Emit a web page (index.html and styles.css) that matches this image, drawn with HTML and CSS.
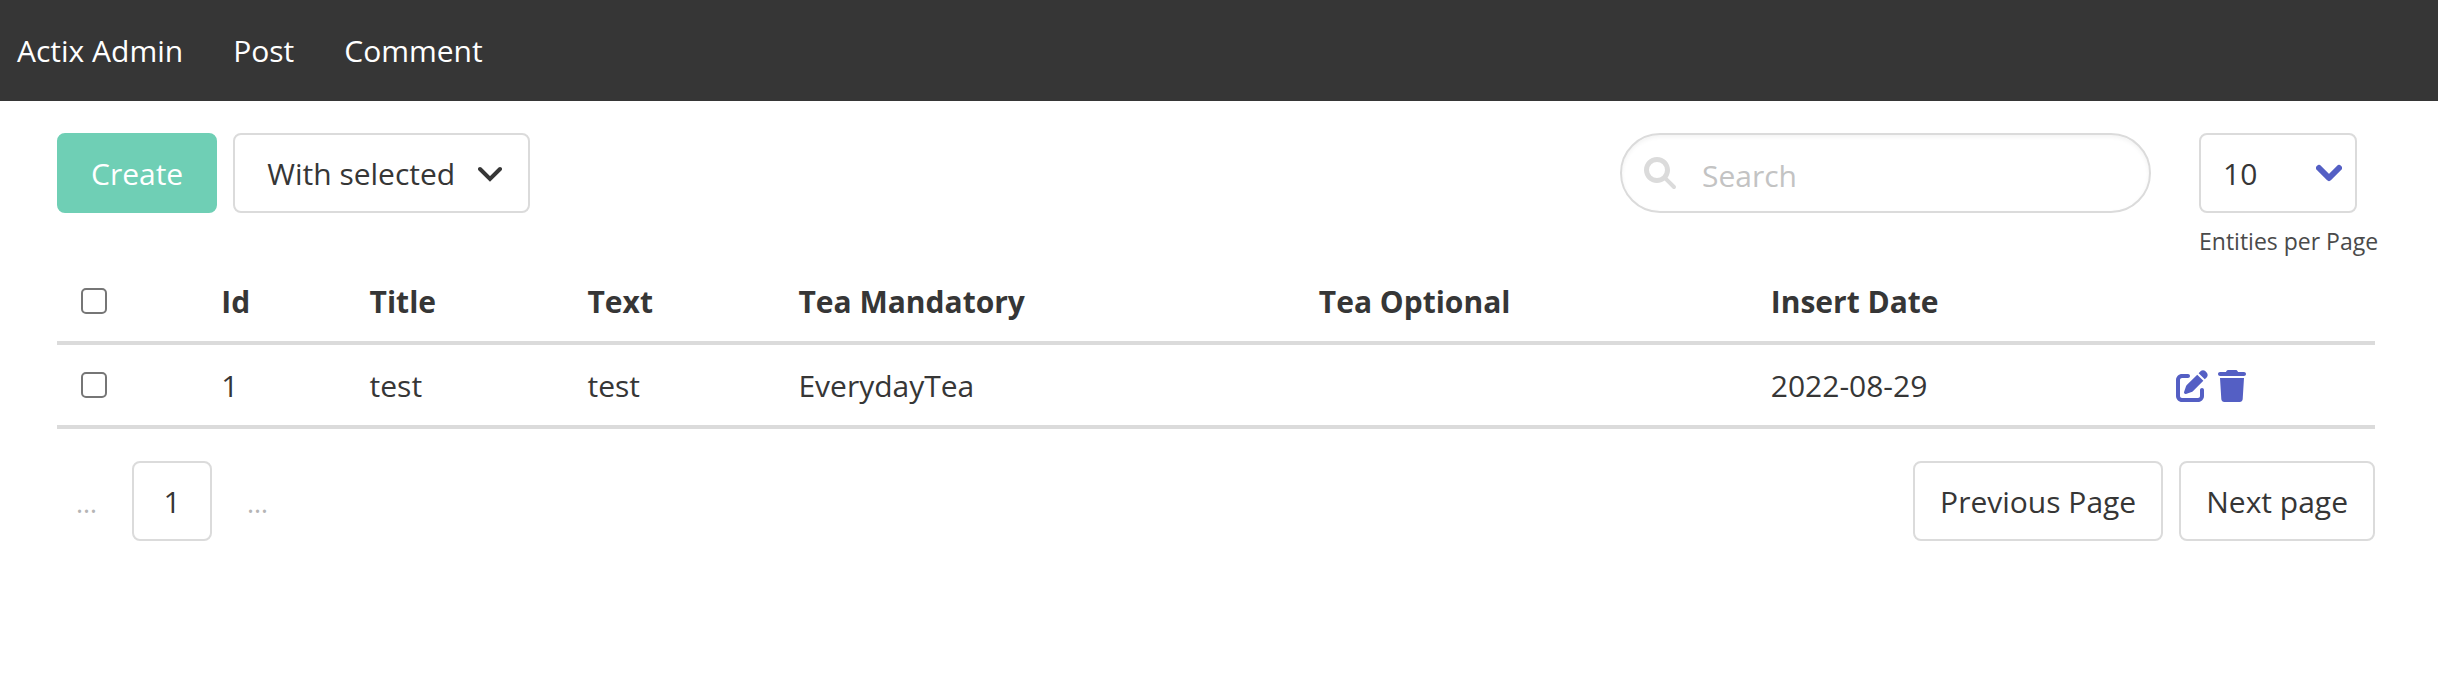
FILE: index.html
```html
<!DOCTYPE html>
<html lang="en">
<head>
<meta charset="utf-8">
<title>Actix Admin</title>
<link rel="stylesheet" href="styles.css">
</head>
<body>
<nav class="navbar" aria-label="Main">
  <a class="navbar-item" href="#">Actix Admin</a>
  <a class="navbar-item" href="#">Post</a>
  <a class="navbar-item" href="#">Comment</a>
</nav>
<main class="content">
  <div class="toolbar">
    <div class="group">
      <button class="button primary" type="button">Create</button>
      <button class="button" type="button">With selected
        <svg class="angle" viewBox="0 0 24 16" aria-hidden="true"><path d="M2 3 12 13 22 3"/></svg>
      </button>
    </div>
    <div class="filters">
      <div class="search">
        <input class="search-input" type="search" placeholder="Search" aria-label="Search">
        <svg class="search-icon" viewBox="0 0 512 512" aria-hidden="true"><path fill-rule="evenodd" d="M416 208c0 45.9-14.9 88.3-40 122.7L502.6 457.4c12.5 12.5 12.5 32.8 0 45.3s-32.8 12.5-45.3 0L330.7 376c-34.4 25.2-76.8 40-122.7 40C93.1 416 0 322.9 0 208S93.1 0 208 0S416 93.1 416 208zM208 336a128 128 0 1 0 0-256 128 128 0 1 0 0 256z"/></svg>
      </div>
      <div class="per-page">
        <div class="select">
          <select id="per-page" class="select-box"><option>10</option><option>20</option><option>50</option></select>
          <svg class="select-arrow" viewBox="0 0 26 18" aria-hidden="true"><path d="M3 4 13 14 23 4"/></svg>
        </div>
        <label class="help" for="per-page">Entities per Page</label>
      </div>
    </div>
  </div>
  <table class="table">
    <colgroup>
      <col class="c-check"><col class="c-id"><col class="c-title"><col class="c-text"><col class="c-mandatory"><col class="c-optional"><col class="c-date"><col>
    </colgroup>
    <thead>
      <tr>
        <th><input class="checkbox" type="checkbox" aria-label="Select all"></th>
        <th>Id</th><th>Title</th><th>Text</th><th>Tea Mandatory</th><th>Tea Optional</th><th>Insert Date</th><th></th>
      </tr>
    </thead>
    <tbody>
      <tr>
        <td><input class="checkbox" type="checkbox" aria-label="Select row 1"></td>
        <td>1</td><td>test</td><td>test</td><td>EverydayTea</td><td></td><td>2022-08-29</td>
        <td>
          <div class="actions">
            <a class="action" href="#" aria-label="Edit"><svg class="icon-edit" viewBox="0 0 512 512" aria-hidden="true"><path d="M471.6 21.7c-21.9-21.9-57.3-21.9-79.2 0L362.3 51.7l97.9 97.9 30.1-30.1c21.9-21.9 21.9-57.3 0-79.2L471.6 21.7zm-299.2 220c-6.1 6.1-10.8 13.6-13.5 21.9l-29.6 88.8c-2.9 8.6-.6 18.1 5.8 24.6s15.9 8.7 24.6 5.8l88.8-29.6c8.2-2.7 15.7-7.4 21.9-13.5L437.7 172.3 339.7 74.3 172.4 241.7zM96 64C43 64 0 107 0 160V416c0 53 43 96 96 96H352c53 0 96-43 96-96V320c0-17.7-14.3-32-32-32s-32 14.3-32 32v96c0 17.7-14.3 32-32 32H96c-17.7 0-32-14.3-32-32V160c0-17.7 14.3-32 32-32h96c17.7 0 32-14.3 32-32s-14.3-32-32-32H96z"/></svg></a>
            <a class="action" href="#" aria-label="Delete"><svg class="icon-trash" viewBox="0 0 448 512" aria-hidden="true"><path d="M135.2 17.7L128 32H32C14.3 32 0 46.3 0 64S14.3 96 32 96H416c17.7 0 32-14.3 32-32s-14.3-32-32-32H320l-7.2-14.3C307.4 6.8 296.3 0 284.2 0H163.8c-12.1 0-23.2 6.8-28.6 17.7zM416 128H32L53.2 467c1.6 25.3 22.6 45 47.9 45H346.9c25.3 0 46.3-19.7 47.9-45L416 128z"/></svg></a>
          </div>
        </td>
      </tr>
    </tbody>
  </table>
  <nav class="pagination" aria-label="Pagination">
    <div class="pages">
      <span class="ellipsis">…</span>
      <a class="page current" href="#" aria-label="Page 1">1</a>
      <span class="ellipsis">…</span>
    </div>
    <div class="group">
      <a class="page" href="#">Previous Page</a>
      <a class="page" href="#">Next page</a>
    </div>
  </nav>
</main>
</body>
</html>
```
FILE: styles.css
```css
*, *::before, *::after { box-sizing: border-box; }
body {
  margin: 0;
  background: #fff;
  color: #363636;
  font-family: "Open Sans", "Noto Sans", sans-serif;
  font-size: 30px;
  line-height: 48px;
}
a { color: inherit; text-decoration: none; }
button, input, select { font: inherit; color: inherit; }

.navbar { display: flex; gap: 50px; padding: 27px 17px 26px; background: #363636; color: #fff; }

.content { padding: 32px 63px 32px 57px; }
.toolbar { display: flex; justify-content: space-between; }
.group { display: flex; gap: 16px; align-items: flex-start; }
.button, .page {
  display: flex; align-items: center; justify-content: center;
  height: 80px; border: 2px solid #dbdbdb; border-radius: 8px;
  background: #fff; white-space: nowrap;
}
.button { padding: 2px 26px 0 32px; gap: 23px; }
.button.primary { padding: 2px 32px 0; border-color: #6fcfb5; background: #6fcfb5; color: #fff; }
.angle { width: 24px; height: 16px; fill: none; stroke: #363636; stroke-width: 4; stroke-linecap: round; }

.filters { display: flex; gap: 48px; }
.search { position: relative; width: 531px; height: 80px; }
.search-input {
  width: 100%; height: 100%; margin: 0; padding: 4px 32px 0 80px;
  border: 2px solid #dbdbdb; border-radius: 40px; background: #fff;
  box-shadow: inset 0 2px 4px rgba(10, 10, 10, .05);
  appearance: none; outline: none;
}
.search-input::placeholder { color: #c3c3c3; opacity: 1; }
.search-icon { position: absolute; left: 24px; top: 24px; width: 32px; height: 32px; fill: #dbdbdb; pointer-events: none; }

.per-page { width: 176px; }
.select { position: relative; width: 158px; height: 80px; }
.select-box {
  width: 100%; height: 100%; margin: 0; padding: 2px 48px 0 22px;
  border: 2px solid #dbdbdb; border-radius: 8px; background: #fff; appearance: none;
}
.select-arrow {
  position: absolute; right: 15px; top: 31px; width: 26px; height: 18px;
  fill: none; stroke: #545fc4; stroke-width: 6; stroke-linecap: round; stroke-linejoin: round; pointer-events: none;
}
.help { display: block; padding: 10px 0 2px; font-size: 23px; line-height: 36px; color: #4a4a4a; white-space: nowrap; }

.table { width: 100%; table-layout: fixed; border-collapse: separate; border-spacing: 0; }
.table th, .table td { height: 84px; padding: 17px 24px 15px; border-bottom: 4px solid #dbdbdb; text-align: left; vertical-align: top; white-space: nowrap; }
.c-check { width: 6.05%; }
.c-id { width: 6.4%; }
.c-title { width: 9.4%; }
.c-text { width: 9.1%; }
.c-mandatory { width: 22.45%; }
.c-optional { width: 19.5%; }
.c-date { width: 17.5%; }
.checkbox {
  display: block; width: 26px; height: 26px; margin: 10px 0;
  border: 2px solid #767676; border-radius: 5px; background: #fff; appearance: none;
}
.checkbox:checked { background: #545fc4; }
.actions { display: flex; gap: 10px; align-items: center; height: 48px; }
.action { display: flex; }
.icon-edit { width: 32px; height: 32px; fill: #545fc4; }
.icon-trash { width: 28px; height: 32px; fill: #545fc4; }

.pagination { display: flex; justify-content: space-between; padding-top: 32px; }
.pages { display: flex; gap: 16px; align-items: center; }
.page { min-width: 80px; padding: 2px 25px 0; }
.ellipsis { width: 59px; padding-top: 4px; color: #b5b5b5; font-size: 27px; text-align: center; }
```
